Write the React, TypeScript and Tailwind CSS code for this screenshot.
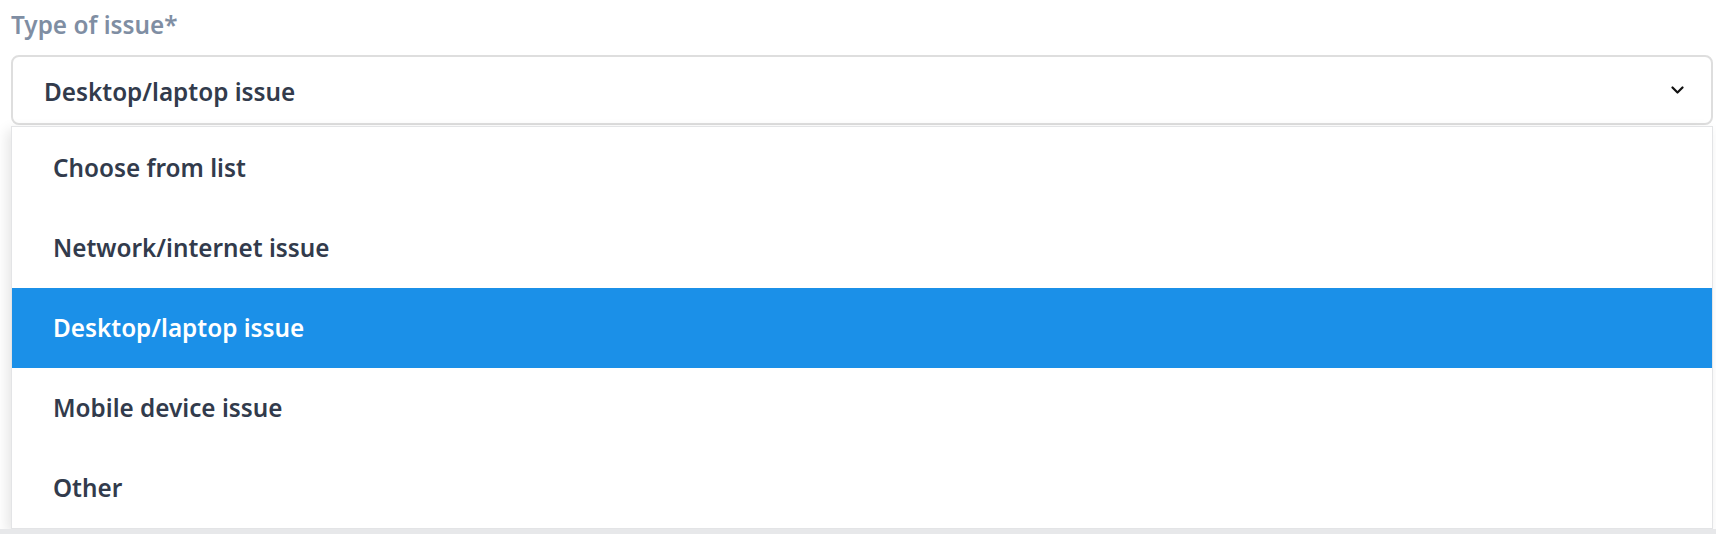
import React from "react";

const options = [
  "Choose from list",
  "Network/internet issue",
  "Desktop/laptop issue",
  "Mobile device issue",
  "Other",
];

export default function App() {
  const selected = "Desktop/laptop issue";
  return (
    <div className="w-[1716px] h-[534px] bg-white overflow-hidden flex flex-col font-['Noto_Sans',sans-serif]">
      <div className="pl-[11px] pr-[3px]">
        <div className="h-[50px] flex items-center text-[24.3px] font-semibold text-[#7f8ea3]">
          Type of issue*
        </div>
        <div className="mt-[5px] h-[70px] border-2 border-[#dedede] rounded-[8px] bg-white flex items-center justify-between pl-[31px] pr-[27px]">
          <span className="pt-[5px] text-[24.3px] font-semibold text-[#323b4c]">{selected}</span>
          <svg width="13" height="8" viewBox="0 0 13 8" fill="none">
            <path d="M1.5 1.5 L6.5 6.5 L11.5 1.5" stroke="#111" strokeWidth="2.2" strokeLinecap="round" strokeLinejoin="round" />
          </svg>
        </div>
        <div className="mt-[1px] bg-white border border-[#e3e4e6] pt-[1px] shadow-[-4px_4px_12px_rgba(0,0,0,0.10)]">
          {options.map((o) => (
            <div
              key={o}
              className={
                o === selected
                  ? "h-[80px] flex items-center pl-[41px] text-[24.3px] font-semibold bg-[#1b90e8] text-white"
                  : "h-[80px] flex items-center pl-[41px] text-[24.3px] font-semibold text-[#323b4c]"
              }
            >
              {o}
            </div>
          ))}
        </div>
      </div>
      <div className="flex-1 bg-[#e7e8ea]" />
    </div>
  );
}
